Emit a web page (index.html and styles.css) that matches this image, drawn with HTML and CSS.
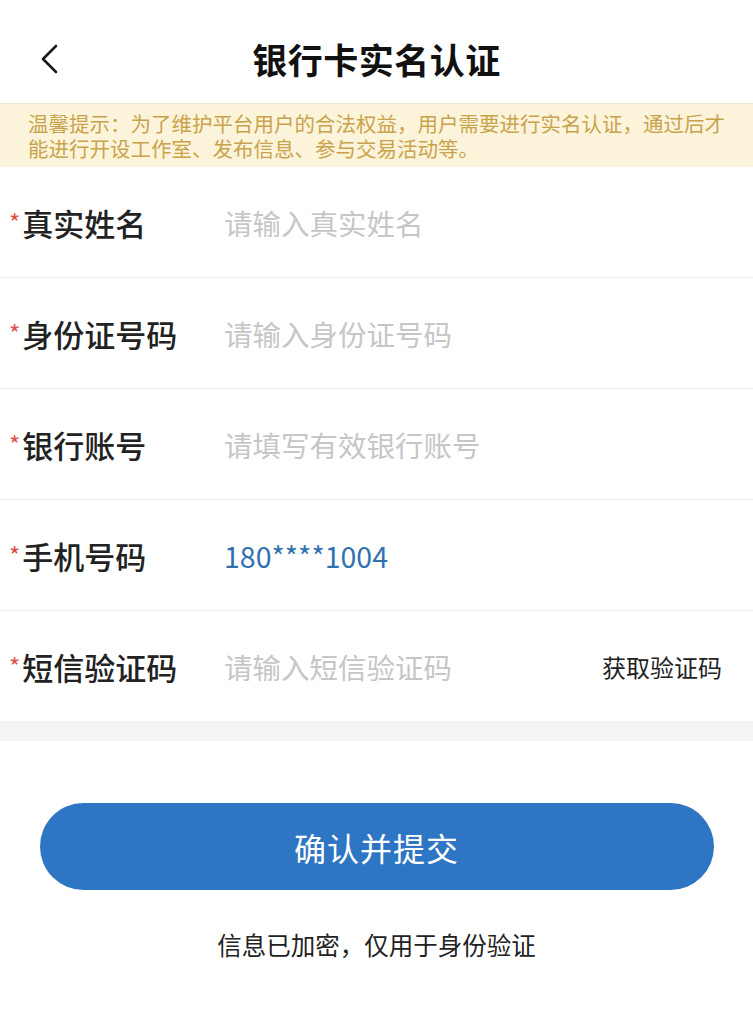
FILE: index.html
```html
<!DOCTYPE html>
<html lang="zh-CN">
<head>
<meta charset="utf-8">
<title>银行卡实名认证</title>
<link rel="stylesheet" href="styles.css">
</head>
<body>
<div class="page">
  <header class="nav">
    <span class="back">
      <svg width="20" height="30" viewBox="0 0 20 30"><path d="M16 2 L3 15 L16 28" fill="none" stroke="#1a1a1a" stroke-width="2.6" stroke-linecap="round" stroke-linejoin="round"/></svg>
    </span>
    <h1 class="title">银行卡实名认证</h1>
  </header>
  <div class="notice">温馨提示：为了维护平台用户的合法权益，用户需要进行实名认证，通过后才能进行开设工作室、发布信息、参与交易活动等。</div>
  <div class="form">
    <div class="row">
      <div class="label"><span class="req">*</span>真实姓名</div>
      <div class="field placeholder">请输入真实姓名</div>
    </div>
    <div class="row">
      <div class="label"><span class="req">*</span>身份证号码</div>
      <div class="field placeholder">请输入身份证号码</div>
    </div>
    <div class="row">
      <div class="label"><span class="req">*</span>银行账号</div>
      <div class="field placeholder">请填写有效银行账号</div>
    </div>
    <div class="row">
      <div class="label"><span class="req">*</span>手机号码</div>
      <div class="field value">180****1004</div>
    </div>
    <div class="row last">
      <div class="label"><span class="req">*</span>短信验证码</div>
      <div class="field placeholder">请输入短信验证码</div>
      <div class="code">获取验证码</div>
    </div>
  </div>
  <div class="band"></div>
  <div class="actions">
    <div class="submit">确认并提交</div>
    <p class="tip">信息已加密，仅用于身份验证</p>
  </div>
</div>
</body>
</html>
```
FILE: styles.css
```css
* { box-sizing: border-box; }
html, body { margin: 0; padding: 0; background: #fff; }
body {
  font-family: "Noto Sans CJK SC", "Noto Sans", sans-serif;
  color: #222;
}
.page { width: 753px; }
.nav {
  height: 103px;
  display: flex;
  align-items: center;
  justify-content: center;
  position: relative;
}
.back {
  position: absolute;
  left: 40px;
  top: 44px;
  width: 20px;
  height: 30px;
  display: block;
}
.back svg { display: block; }
.title {
  margin: 0;
  font-size: 35px;
  font-weight: 700;
  letter-spacing: 0.5px;
  color: #111;
  padding-top: 14px;
}
.notice {
  border-top: 1px solid #e8e3d3;
  background: #fcf4da;
  color: #c9a34c;
  font-size: 20.5px;
  line-height: 25px;
  padding: 7px 18px 7px 28px;
  height: 64px;
}
.form { display: flex; flex-direction: column; }
.row {
  height: 111px;
  border-bottom: 1px solid #ececec;
  display: flex;
  align-items: center;
}
.row.last { border-bottom: none; height: 110px; }
.label {
  width: 224px;
  padding-left: 9px;
  font-size: 31px;
  font-weight: 500;
  color: #222;
  display: flex;
  align-items: center;
}
.req {
  color: #d9504a;
  font-size: 24px;
  font-weight: 400;
  margin-right: 2px;
  position: relative;
  top: -1px;
}
.field {
  flex: 1;
  font-size: 28.5px;
}
.placeholder { color: #c6c6c6; }
.value { color: #2f72ad; font-size: 28.5px; }
.code {
  font-size: 24px;
  color: #222;
  padding-right: 31px;
}
.band { height: 20px; background: #f4f4f4; }
.actions {
  display: flex;
  flex-direction: column;
  align-items: center;
  padding-top: 62px;
}
.submit {
  width: 674px;
  height: 87px;
  border-radius: 44px;
  background: #2e76c3;
  color: #fff;
  font-size: 32px;
  display: flex;
  align-items: center;
  justify-content: center;
  letter-spacing: 1px;
}
.tip {
  margin: 38px 0 0;
  font-size: 24.5px;
  line-height: 34px;
  color: #222;
}
```
